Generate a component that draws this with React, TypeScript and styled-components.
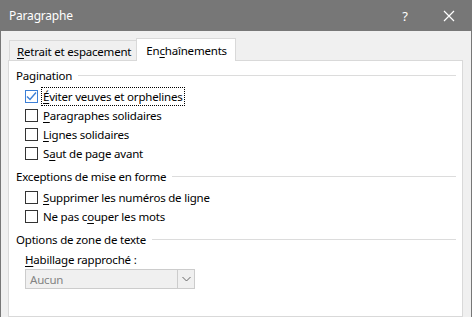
import styled, { createGlobalStyle } from "styled-components";

const GlobalStyle = createGlobalStyle`
  html, body {
    margin: 0;
    padding: 0;
    background: #f0f0f0;
  }
  body {
    font-family: "Noto Sans", "Open Sans", sans-serif;
    font-size: 11.5px;
    letter-spacing: -0.2px;
    color: #000;
  }
`;

const Window = styled.div`
  width: 472px;
  height: 317px;
  box-sizing: border-box;
  border-left: 1px solid #777;
  border-right: 1px solid #777;
  background: #f0f0f0;
  overflow: hidden;
  display: flex;
  flex-direction: column;
`;

const TitleBar = styled.div`
  height: 31px;
  flex: none;
  background: #777;
  color: #fff;
  display: flex;
  align-items: center;
  padding-left: 8px;
  font-size: 12px;
`;

const Title = styled.div`
  flex: 1;
`;

const TitleButton = styled.div`
  width: 44px;
  height: 31px;
  display: flex;
  align-items: center;
  justify-content: center;
  font-size: 13px;
`;

const Body = styled.div`
  flex: 1;
  display: flex;
  flex-direction: column;
  padding: 7px 8px 0 7px;
`;

const TabRow = styled.div`
  display: flex;
  align-items: flex-end;
  padding-left: 1px;
  height: 22px;
`;

const Tab = styled.div<{ $active?: boolean }>`
  box-sizing: border-box;
  height: ${(p) => (p.$active ? "23px" : "20px")};
  padding: ${(p) => (p.$active ? "0 8px 0 9px" : "2px 5px 0 7px")};
  display: flex;
  align-items: center;
  background: ${(p) => (p.$active ? "#fff" : "#f0f0f0")};
  border: 1px solid #d9d9d9;
  border-bottom: none;
  margin-bottom: ${(p) => (p.$active ? "-1px" : "0")};
  margin-left: ${(p) => (p.$active ? "-1px" : "0")};
  position: relative;
  z-index: ${(p) => (p.$active ? 1 : 0)};
`;

const Panel = styled.div`
  flex: 1;
  background: #fff;
  border: 1px solid #d9d9d9;
  padding: 6px 6px 0 7px;
`;

const GroupHeader = styled.div`
  display: flex;
  align-items: center;
  gap: 6px;
  height: 17px;
  &::after {
    content: "";
    flex: 1;
    height: 1px;
    background: #dcdcdc;
  }
`;

const Group = styled.div`
  margin-bottom: 5px;
`;

const Rows = styled.div`
  padding: 3px 0 0 9px;
`;

const Row = styled.div`
  display: flex;
  align-items: center;
  height: 19px;
  gap: 4px;
`;

const Box = styled.div<{ $checked?: boolean }>`
  width: 13px;
  height: 13px;
  box-sizing: border-box;
  border: 1px solid ${(p) => (p.$checked ? "#3c7fd6" : "#333")};
  background: #fff;
  display: flex;
  align-items: center;
  justify-content: center;
`;

const Label = styled.span<{ $focused?: boolean }>`
  padding: 1px 1px;
  outline: ${(p) => (p.$focused ? "1px dotted #000" : "none")};
  line-height: 15px;
`;

const Key = styled.span`
  text-decoration: underline;
  text-underline-offset: 2px;
`;

const FieldLabel = styled.div`
  padding: 4px 0 0 9px;
  height: 17px;
`;

const Combo = styled.div`
  margin-left: 9px;
  width: 170px;
  height: 20px;
  box-sizing: border-box;
  border: 1px solid #cccccc;
  background: #f0f0f0;
  display: flex;
  color: #838383;
`;

const ComboText = styled.div`
  flex: 1;
  padding-left: 4px;
  display: flex;
  align-items: center;
`;

const ComboArrow = styled.div`
  width: 16px;
  border-left: 1px solid #cccccc;
  display: flex;
  align-items: center;
  justify-content: center;
`;

const Check = () => (
  <svg width="11" height="11" viewBox="0 0 11 11">
    <path d="M1 5.5 L4 8.5 L10 1.5" fill="none" stroke="#3c7fd6" strokeWidth="1.4" />
  </svg>
);

function CheckRow(props: { pre?: string; k: string; post: string; checked?: boolean; focused?: boolean }) {
  return (
    <Row>
      <Box $checked={props.checked}>{props.checked ? <Check /> : null}</Box>
      <Label $focused={props.focused}>
        {props.pre}
        <Key>{props.k}</Key>
        {props.post}
      </Label>
    </Row>
  );
}

export default function App() {
  return (
    <>
      <GlobalStyle />
      <Window>
        <TitleBar>
          <Title>Paragraphe</Title>
          <TitleButton>?</TitleButton>
          <TitleButton>
            <svg width="12" height="12" viewBox="0 0 12 12">
              <path d="M1 1 L11 11 M11 1 L1 11" stroke="#fff" strokeWidth="1.2" />
            </svg>
          </TitleButton>
        </TitleBar>
        <Body>
          <TabRow>
            <Tab>
              <span>
                <Key>R</Key>etrait et espacement
              </span>
            </Tab>
            <Tab $active>
              <span>
                En<Key>c</Key>haînements
              </span>
            </Tab>
          </TabRow>
          <Panel>
            <Group>
              <GroupHeader>Pagination</GroupHeader>
              <Rows>
                <CheckRow k="É" post="viter veuves et orphelines" checked focused />
                <CheckRow k="P" post="aragraphes solidaires" />
                <CheckRow k="L" post="ignes solidaires" />
                <CheckRow pre="S" k="a" post="ut de page avant" />
              </Rows>
            </Group>
            <Group>
              <GroupHeader>Exceptions de mise en forme</GroupHeader>
              <Rows>
                <CheckRow k="S" post="upprimer les numéros de ligne" />
                <CheckRow pre="Ne pas c" k="o" post="uper les mots" />
              </Rows>
            </Group>
            <Group>
              <GroupHeader>Options de zone de texte</GroupHeader>
              <FieldLabel>
                <Key>H</Key>abillage rapproché :
              </FieldLabel>
              <Combo>
                <ComboText>Aucun</ComboText>
                <ComboArrow>
                  <svg width="9" height="6" viewBox="0 0 9 6">
                    <path d="M0.5 1 L4.5 5 L8.5 1" fill="none" stroke="#666" strokeWidth="1" />
                  </svg>
                </ComboArrow>
              </Combo>
            </Group>
          </Panel>
        </Body>
      </Window>
    </>
  );
}
